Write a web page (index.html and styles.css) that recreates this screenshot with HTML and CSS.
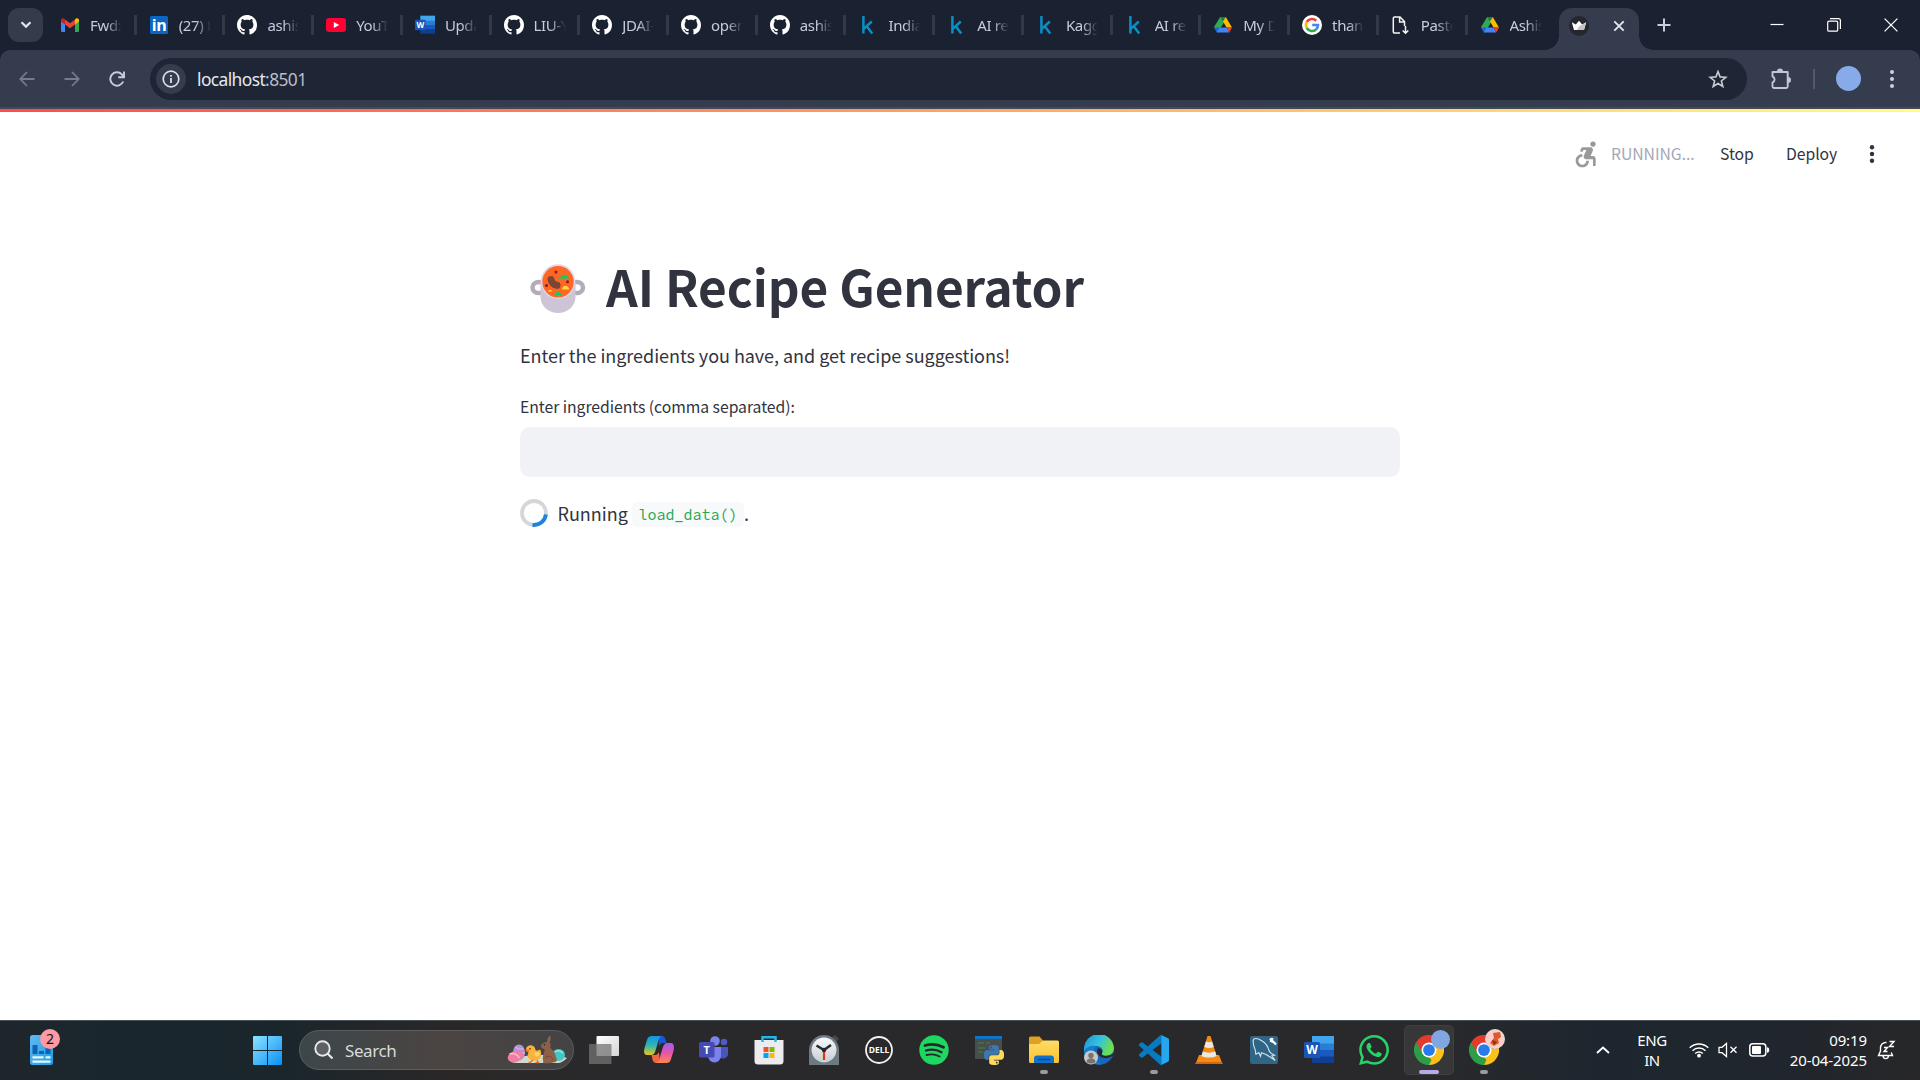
FILE: index.html
```html
<!DOCTYPE html>
<html lang="en">
<head>
<meta charset="utf-8">
<title>AI Recipe Generator</title>
<link rel="stylesheet" href="styles.css">
</head>
<body>
<svg class="defs" width="0" height="0" aria-hidden="true">
  <defs>
    <linearGradient id="gStart" x1="0" y1="0" x2="1" y2="1"><stop offset="0" stop-color="#8be4ff"/><stop offset="1" stop-color="#0a90f5"/></linearGradient>
    <linearGradient id="gNews" x1="0" y1="0" x2="1" y2="1"><stop offset="0" stop-color="#5fb9f5"/><stop offset="1" stop-color="#1c9fdf"/></linearGradient>
    <linearGradient id="gCopA" x1="0" y1="0" x2="0" y2="1"><stop offset="0" stop-color="#1593e8"/><stop offset=".5" stop-color="#2cb8b0"/><stop offset="1" stop-color="#f0c419"/></linearGradient>
    <linearGradient id="gCopB" x1="0" y1="0" x2="0" y2="1"><stop offset="0" stop-color="#a05cf0"/><stop offset=".5" stop-color="#e556a8"/><stop offset="1" stop-color="#ff8650"/></linearGradient>
    <linearGradient id="gFolder" x1="0" y1="0" x2="0" y2="1"><stop offset="0" stop-color="#ffdd66"/><stop offset="1" stop-color="#fbc02f"/></linearGradient>
    <linearGradient id="gEdge" x1="0" y1="0" x2="1" y2=".4"><stop offset="0" stop-color="#1b8fd8"/><stop offset=".55" stop-color="#35c1df"/><stop offset="1" stop-color="#6be04c"/></linearGradient>
    <linearGradient id="gView" x1="0" y1="0" x2="1" y2="1"><stop offset="0" stop-color="#fff"/><stop offset="1" stop-color="#d5d5d5"/></linearGradient>
    <linearGradient id="gDial" x1="0" y1="0" x2="0" y2="1"><stop offset="0" stop-color="#f7f8fa"/><stop offset="1" stop-color="#c9ced3"/></linearGradient>
    <symbol id="github" viewBox="0 0 16 16"><path fill="#fff" d="M8 0C3.58 0 0 3.58 0 8c0 3.54 2.29 6.53 5.47 7.59.4.07.55-.17.55-.38 0-.19-.01-.82-.01-1.49-2.01.37-2.53-.49-2.69-.94-.09-.23-.48-.94-.82-1.13-.28-.15-.68-.52-.01-.53.63-.01 1.08.58 1.23.82.72 1.21 1.87.87 2.33.66.07-.52.28-.87.51-1.07-1.78-.2-3.64-.89-3.64-3.95 0-.87.31-1.59.82-2.15-.08-.2-.36-1.02.08-2.12 0 0 .67-.21 2.2.82.64-.18 1.32-.27 2-.27s1.36.09 2 .27c1.53-1.04 2.2-.82 2.2-.82.44 1.1.16 1.92.08 2.12.51.56.82 1.27.82 2.15 0 3.07-1.87 3.75-3.65 3.95.29.25.54.73.54 1.48 0 1.07-.01 1.93-.01 2.2 0 .21.15.46.55.38A8.01 8.01 0 0 0 16 8c0-4.42-3.58-8-8-8z"/></symbol>
    <symbol id="kaggle" viewBox="0 0 20 20"><path d="M5.4 1v17.5M13.8 6.5 6 13.6M8.6 11l5.6 7.5" fill="none" stroke="#0a8fc4" stroke-width="2.5"/></symbol>
    <symbol id="drive" viewBox="0 0 20 20"><path fill="#34a853" d="M7.2 2h2.9l2.1 3.6-7.4 12L1 11.9z"/><path fill="#188038" d="M7.2 2h5.6L10 6.8z"/><path fill="#fbbc04" d="M12.8 2 19 12.4h-5.4L10 6.4z"/><path fill="#4285f4" d="M6.4 12.4h7.2l2.6 5.2H3.8z"/><path fill="#1967d2" d="M1 12.4h5.4l-2.6 5.2z"/><path fill="#ea4335" d="M13.6 12.4H19l-2.8 5.2z"/></symbol>
    <symbol id="word" viewBox="0 0 30 28"><path fill="#41a5ee" d="M8 0h22v8H8z"/><path fill="#2b7cd3" d="M8 7.5h22v7H8z"/><path fill="#185abd" d="M8 14h22v7H8z"/><path fill="#103f91" d="M8 20.5h22V27H8z"/><rect y="6" width="16" height="16" rx="1.5" fill="#1856b8"/><text x="8" y="18.3" text-anchor="middle" class="logo-w">W</text></symbol>
    <symbol id="chrome" viewBox="0 0 48 48"><path fill="#e33b2e" d="M24 24 3.2 12A24 24 0 0 1 44.8 12z"/><path fill="#fcc117" d="M24 24 44.8 12A24 24 0 0 1 24 48z"/><path fill="#2d9d49" d="M24 24v24A24 24 0 0 1 3.2 12z"/><path fill="#e33b2e" d="M24 12h20.8L40 15 24 20zM3.2 12l10.4 18L20 20z"/><path fill="#fcc117" d="m34.4 30-10.4 18-2-3 8-18z"/><path fill="#2d9d49" d="m3.2 12 10.4 18L24 35l4 5-4 8C8 46-4 30 3.2 12z"/><circle cx="24" cy="24" r="12" fill="#fff"/><circle cx="24" cy="24" r="9.4" fill="#287be9"/></symbol>
    <symbol id="pyhalf" viewBox="0 0 24 24"><path d="M14.25.18l.9.2.73.26.59.3.45.32.34.34.25.34.16.33.1.3.04.26.02.2-.01.13V8.5l-.05.63-.13.55-.21.46-.26.38-.3.31-.33.25-.35.19-.35.14-.33.1-.3.07-.26.04-.21.02H8.77l-.69.05-.59.14-.5.22-.41.27-.33.32-.27.35-.2.36-.15.37-.1.35-.07.32-.04.27-.02.21v3.06H3.17l-.21-.03-.28-.07-.32-.12-.35-.18-.36-.26-.36-.36-.35-.46-.32-.59-.28-.73-.21-.88-.14-1.05-.05-1.23.06-1.22.16-1.04.24-.87.32-.71.36-.57.4-.44.42-.33.42-.24.4-.16.36-.1.32-.05.24-.01h.16l.06.01h8.16v-.83H6.18l-.01-2.75-.02-.37.05-.34.11-.31.17-.28.25-.26.31-.23.38-.2.44-.18.51-.15.58-.12.64-.1.71-.06.77-.04.84-.02 1.27.05zm-6.3 1.98l-.23.33-.08.41.08.41.23.34.33.22.41.09.41-.09.33-.22.23-.34.08-.41-.08-.41-.23-.33-.33-.22-.41-.09-.41.09z"/></symbol>
  </defs>
</svg>

<div class="tabstrip">
  <div class="tab-search"><svg width="12" height="8" viewBox="0 0 12 8"><path d="m1.5 1.2 4.5 4.4 4.5-4.4" fill="none" stroke="#dfe2ee" stroke-width="2.2"/></svg></div>
  <div class="tabs">
    <div class="tab"><svg class="fav" viewBox="0 0 20 20"><path fill="#4285f4" d="M1 5.5 5 8v9H2.2A1.2 1.2 0 0 1 1 15.8z"/><path fill="#34a853" d="M15 8l4-2.5v10.3a1.2 1.2 0 0 1-1.2 1.2H15z"/><path fill="#fbbc04" d="M15 4.5 16 3.6c1.3-1 3-.1 3 1.5V6.5l-4 3z"/><path fill="#c5221f" d="M5 4.5 4 3.6C2.7 2.6 1 3.5 1 5.1V6.5l4 3z"/><path fill="#ea4335" d="M5 4.5l5 3.8 5-3.8v5l-5 3.8-5-3.8z"/></svg><span>Fwd: M</span></div>
    <div class="tab"><svg class="fav" viewBox="0 0 20 20"><rect x="1" y="1" width="18" height="18" rx="1.5" fill="#0a66c2"/><text x="10" y="15.8" text-anchor="middle" class="logo-in">in</text></svg><span>(27) Fe</span></div>
    <div class="tab"><svg class="fav"><use href="#github"/></svg><span>ashish</span></div>
    <div class="tab"><svg class="fav" viewBox="0 0 20 20"><rect y="3" width="20" height="14" rx="3.2" fill="#ff0033"/><path fill="#fff" d="M7.8 7v6l5.4-3z"/></svg><span>YouTu</span></div>
    <div class="tab"><svg class="fav"><use href="#word"/></svg><span>Updat</span></div>
    <div class="tab"><svg class="fav"><use href="#github"/></svg><span>LIU-Yu</span></div>
    <div class="tab"><svg class="fav"><use href="#github"/></svg><span>JDAI-C</span></div>
    <div class="tab"><svg class="fav"><use href="#github"/></svg><span>openc</span></div>
    <div class="tab"><svg class="fav"><use href="#github"/></svg><span>ashish</span></div>
    <div class="tab"><svg class="fav"><use href="#kaggle"/></svg><span>Indian</span></div>
    <div class="tab"><svg class="fav"><use href="#kaggle"/></svg><span>AI reci</span></div>
    <div class="tab"><svg class="fav"><use href="#kaggle"/></svg><span>Kaggle</span></div>
    <div class="tab"><svg class="fav"><use href="#kaggle"/></svg><span>AI reci</span></div>
    <div class="tab"><svg class="fav"><use href="#drive"/></svg><span>My Dr</span></div>
    <div class="tab"><svg class="fav" viewBox="0 0 20 20"><circle cx="10" cy="10" r="10" fill="#fff"/><g fill="none" stroke-width="2.6"><path stroke="#ea4335" d="M4.8 7A6 6 0 0 1 14.2 5.7"/><path stroke="#fbbc04" d="M4.8 13a6 6 0 0 1 0-6"/><path stroke="#34a853" d="M14 14.5A6 6 0 0 1 4.8 13"/><path stroke="#4285f4" d="M10.2 10H16a6 6 0 0 1-2 4.5"/></g></svg><span>thank</span></div>
    <div class="tab"><svg class="fav" viewBox="0 0 20 20"><path fill="none" stroke="#f4f4f4" stroke-width="1.5" d="M9 18H3.500a1.200 1.200 0 0 1-1.200-1.200V3.200A1.200 1.200 0 0 1 3.500 2H9l4.500 4.500V11M8.600 2v5h5M14.500 11v7M11.700 15.500l2.800 2.800 2.800-2.800"/></svg><span>Paste</span></div>
    <div class="tab last"><svg class="fav"><use href="#drive"/></svg><span>Ashish</span></div>
  </div>
  <div class="tab-active">
    <svg class="fav" viewBox="0 0 20 20"><circle cx="10" cy="10" r="10" fill="#25262e"/><path fill="#fff" d="m2.800 6.300 4 2.200L10 4.800l3.200 3.700 4-2.200-2.200 7.700H5z"/><path fill="#c4c4c8" d="m10 10.500 7.200-4.200L15 14H8z"/></svg>
    <svg width="12" height="12" viewBox="0 0 12 12"><path d="m1.300 1.300 9.400 9.400m0-9.400-9.400 9.400" stroke="#e3e6f0" stroke-width="1.900"/></svg>
  </div>
  <svg class="new-tab" width="14" height="14" viewBox="0 0 14 14"><path d="M7 .5v13M.5 7h13" stroke="#c9cede" stroke-width="2"/></svg>
  <div class="window-controls">
    <svg width="14" height="14" viewBox="0 0 14 14"><path d="M.5 6.500h13" stroke="#fff" stroke-width="1.200"/></svg>
    <svg width="14" height="14" viewBox="0 0 14 14"><g fill="none" stroke="#fff" stroke-width="1.200"><rect x=".7" y="3.200" width="10" height="10" rx="1.300"/><path d="M3 .7h8.500a1.900 1.900 0 0 1 1.900 1.900V11"/></g></svg>
    <svg width="14" height="14" viewBox="0 0 14 14"><path d="m.6.6 12.800 12.800m0-12.800L.6 13.400" stroke="#fff" stroke-width="1.300"/></svg>
  </div>
</div>

<div class="toolbar">
  <div class="nav">
    <svg width="16" height="16" viewBox="0 0 16 16"><path d="M15.500 8H1.500M8 1 1.300 8 8 15" fill="none" stroke="#747b8c" stroke-width="1.800"/></svg>
    <svg width="16" height="16" viewBox="0 0 16 16"><path d="M.5 8h14M8 1l6.700 7L8 15" fill="none" stroke="#747b8c" stroke-width="1.800"/></svg>
    <svg width="16" height="16" viewBox="0 0 16 16"><path d="M14.200 10.500A6.700 6.700 0 1 1 12.800 3.300l2 2.400M15 .5v5.700H9.300" fill="none" stroke="#c9cede" stroke-width="1.900"/></svg>
  </div>
  <div class="address">
    <div class="info"><svg width="18" height="18" viewBox="0 0 18 18"><circle cx="9" cy="9" r="7.800" fill="none" stroke="#dcdfe9" stroke-width="1.700"/><path d="M9 8v5M9 5v1.800" stroke="#dcdfe9" stroke-width="1.800"/></svg></div>
    <div class="url">localhost<span>:8501</span></div>
    <svg class="star" width="20" height="20" viewBox="0 0 20 20"><path d="m10 2.600 2.100 5.300 5.700.4-4.400 3.700 1.400 5.500-4.800-3-4.800 3 1.400-5.500L2.200 8.300l5.700-.4z" fill="none" stroke="#c9cbd3" stroke-width="1.600"/></svg>
  </div>
  <svg class="puzzle" width="22" height="22" viewBox="0 0 22 22"><path d="M2.500 4h15.200v14.500a1.500 1.500 0 0 1-1.500 1.500H4a1.500 1.500 0 0 1-1.500-1.500v-4a3.200 3.200 0 0 0 0-6z" fill="none" stroke="#c0c6dc" stroke-width="1.900" stroke-linejoin="round"/><path d="M7 3.500a3 3 0 0 1 6 0zM18 9a3 3 0 0 1 0 6z" fill="#c0c6dc"/></svg>
  <i class="bar-sep"></i>
  <i class="avatar"></i>
  <svg width="4" height="18" viewBox="0 0 4 18" fill="#cdd1e0"><circle cx="2" cy="2" r="2"/><circle cx="2" cy="9" r="2"/><circle cx="2" cy="16" r="2"/></svg>
</div>

<div class="page">
  <div class="decoration"></div>
  <div class="app-header">
    <svg width="32" height="32" viewBox="0 0 24 24" fill="#999"><circle cx="18" cy="4.540" r="2"/><path d="M15 17h-2c0 1.650-1.350 3-3 3s-3-1.350-3-3 1.350-3 3-3v-2c-2.760 0-5 2.240-5 5s2.240 5 5 5 5-2.240 5-5zM18 13.500h-1.860l1.670-3.670C18.420 8.500 17.440 7 15.960 7h-5.200c-.81 0-1.540.47-1.870 1.200L8.220 10l1.920.53.65-1.530H13l-1.830 4.100c-.6 1.330.39 2.900 1.850 2.900H18v5h2v-5.500c0-1.100-.9-2-2-2z"/></svg>
    <span class="running">RUNNING...</span>
    <span class="stop">Stop</span>
    <span class="deploy">Deploy</span>
    <svg class="kebab" width="6" height="18" viewBox="0 0 6 18" fill="#31333f"><circle cx="3" cy="2.300" r="2.200"/><circle cx="3" cy="9" r="2.200"/><circle cx="3" cy="15.700" r="2.200"/></svg>
  </div>
  <main>
    <h1>
      <svg width="56" height="50" viewBox="0 0 56 50"><g fill="none" stroke="#b4acbc" stroke-width="4.500"><ellipse cx="9" cy="23.500" rx="6.500" ry="5.600"/><ellipse cx="46.500" cy="23.500" rx="6.500" ry="5.600"/></g><path fill="#cdc4d6" d="M10.500 18h35v15c0 9-8 16-17.500 16s-17.500-7-17.500-16z"/><ellipse cx="28" cy="17.500" rx="17.300" ry="17.300" fill="#e1d8ec"/><ellipse cx="28" cy="17.800" rx="15.700" ry="15.700" fill="#ff6723"/><path d="m21 15.500c.5 3 3 5.500 6 5.800" fill="none" stroke="#7d4533" stroke-width="7" stroke-linecap="round"/><path fill="#00d26a" d="M28 14.500c1-2 3-2 4-1.800 1-3 6-3 7.200 1.800zM24.500 31c1-4 6-4 7 0z"/><path fill="#fcd53f" d="M32 25.500c.7-5 6-5 7.300 0zM18 27.500c.7-2 3.500-2 4.300 0z"/><g fill="#8c1337"><circle cx="26" cy="8" r="1.500"/><circle cx="37.500" cy="17.800" r="1.500"/><circle cx="16.500" cy="21.500" r="1.500"/></g></svg>
      <span>AI Recipe Generator</span>
    </h1>
    <p class="intro">Enter the ingredients you have, and get recipe suggestions!</p>
    <label for="ingredients">Enter ingredients (comma separated):</label>
    <input id="ingredients" type="text">
    <div class="status">
      <svg width="28" height="28" viewBox="0 0 28 28" fill="none" stroke-width="3.800"><circle cx="14" cy="14" r="12" stroke="#d5d6d8"/><path d="M25.900 15.500A12 12 0 0 1 12.500 25.900" stroke="#1c83e1"/></svg>
      <span class="status-text">Running</span><code>load_data()</code><span class="status-text dot">.</span>
    </div>
  </main>
</div>

<div class="taskbar">
  <div class="widgets">
    <svg width="24" height="31" viewBox="0 0 24 31"><rect width="23" height="30" rx="2.500" fill="url(#gNews)"/><path fill="#0f62b4" d="M2.500 10h5v9h-5zM9 16h5v3H9zM15.500 12h5v7h-5z"/><path d="M2.500 22.300h11M15.500 22.300h5M2.500 26.600h18" stroke="#e6f7ff" stroke-width="2.200"/></svg>
    <b>2</b>
  </div>
  <svg class="start" width="29" height="29" viewBox="0 0 29 29" fill="url(#gStart)"><path d="M1 0h13v14H0V1a1 1 0 0 1 1-1zM15 0h13a1 1 0 0 1 1 1v13H15zM0 15h14v14H1a1 1 0 0 1-1-1zM15 15h14v13a1 1 0 0 1-1 1H15z"/></svg>
  <div class="search">
    <svg width="20" height="20" viewBox="0 0 20 20"><circle cx="8.500" cy="8.500" r="7.200" fill="#5d6166" stroke="#e8eaea" stroke-width="1.900"/><path d="m13.500 13.500 5 5" stroke="#e8eaea" stroke-width="2.200"/></svg>
    <span>Search</span>
    <svg width="60" height="30" viewBox="0 0 60 30"><path d="M2 25c10-5 44-7 58-2-3 3-6 4.500-8 5H10c-4 0-7-1-8-3z" fill="#cfdcca"/><ellipse cx="12" cy="17.500" rx="6" ry="8" fill="#b791d5"/><path d="M8 12q3 3 9 2M7 16q5 3 11 2" stroke="#d9bdea" fill="none"/><ellipse cx="8.500" cy="21.500" rx="8" ry="5.500" transform="rotate(-20 8.500 21.500)" fill="#ef7da4"/><path d="M2.500 19q6-2 10 4" stroke="#ffc1d3" fill="none" stroke-width="1.400"/><path d="M19 14c1-5 9-5 9.500 1 2 2 3-1 5 0 2 7-1 10.500-6 10.500-6 0-8.500-4-6-7.500z" fill="#fbb23b"/><path d="M27 18c2-1 4-1 6 0-.5 3-3 4-5 3z" fill="#ffd277"/><path d="m17.500 15.800 4.500-1.500v3z" fill="#ed7d20"/><circle cx="23" cy="13.800" r=".8" fill="#402515"/><path d="m26 25-3 2.500h-1.500M30 25l1.500 2.500h-3" stroke="#e76e21" stroke-width="1.300" fill="none"/><ellipse cx="51.500" cy="20" rx="6.500" ry="6" fill="#43c6c5"/><path d="M48 17q4-3 8 1" stroke="#93e5e0" stroke-width="1.500" fill="none"/><path d="M36 28c1-2-1-4 0-7 .5-3 2-5 1.500-7-3.500-.5-4.500-3.500-2.500-5 1.500-1.800 3.500-2 5-1.800 0-3 1-5 3-6.700 1.200 1.700 1 4-.5 7 1.500 1 1.500 3 .5 5 3 3 6 6.500 6 10 1.500 1.500 1 3.500-.5 4.500-4 1.200-9 1.500-12.500 1z" fill="#8c6148"/><path d="M38 23c3-3 7-2 8 2" fill="none" stroke="#6f4835"/><circle cx="37.500" cy="9.800" r=".8" fill="#321e15"/></svg>
  </div>
  <div class="apps">
    <div class="app"><svg width="30" height="28" viewBox="0 0 30 28"><rect x="7.500" width="22.500" height="20" rx="1" fill="url(#gView)"/><rect y="8" width="22.500" height="20" rx="1" fill="#747474" fill-opacity=".75"/></svg></div>
    <div class="app"><svg width="30" height="28" viewBox="0 0 30 28"><path fill="#1b55cf" d="M14 0h4c3 0 3.500 3 4.500 7H19c-2 0-3 1-4 3z"/><path fill="url(#gCopA)" d="M8 0h10c-3 1-3.500 4-4.500 8L11 16c-.8 2-2 3-4 3H3c-3 0-3.500-3-2.500-7L3 4c1-3 2-4 5-4z"/><path fill="#ef6640" d="M16 27h-4c-3 0-3.500-3-4.500-8H11c2 0 3-1 4-3z"/><path fill="url(#gCopB)" d="M22 27H12c3-1 3.500-4 4.500-8L19 11c.8-2 2-4 4-4h4c3 0 3.500 4 2.500 8L27 23c-1 3-2 4-5 4z"/></svg></div>
    <div class="app"><svg width="30" height="28" viewBox="0 0 30 28"><circle cx="25" cy="6" r="3.300" fill="#5059c9"/><path d="M21 11h8v7.500a5 5 0 0 1-8 3z" fill="#4b53bc"/><circle cx="16" cy="5" r="4.800" fill="#7b83eb"/><path d="M9 11h13v9a6.500 6.500 0 0 1-13 0z" fill="#7b83eb"/><rect y="6" width="15.500" height="15.500" rx="1.500" fill="#444bb5"/><text x="7.700" y="17.800" text-anchor="middle" class="logo-t">T</text></svg></div>
    <div class="app"><svg width="30" height="30" viewBox="0 0 30 30"><path fill="#ececee" d="M.5 5h29v21a3.500 3.500 0 0 1-3.500 3.500H4A3.500 3.500 0 0 1 .5 26z"/><path d="M8.500 7V2.200h13V7" fill="none" stroke="#24b5ea" stroke-width="2.500"/><path fill="#f25022" d="M9.500 12H14.500v5h-5z"/><path fill="#7fba00" d="M15.500 12h5v5h-5z"/><path fill="#00a4ef" d="M9.500 18h5v5h-5z"/><path fill="#ffb900" d="M15.500 18h5v5h-5z"/></svg></div>
    <div class="app"><svg width="30" height="30" viewBox="0 0 30 30"><path fill="#47494c" d="m23 2 3-2 4 4-3 3z"/><path fill="#6d7a84" d="M0 30V15a15 15 0 0 1 30 0v15z"/><circle cx="15" cy="15" r="12.400" fill="url(#gDial)"/><path d="m7.500 10.500 7.500 4.500 7-5" fill="none" stroke="#26292c" stroke-width="2.500"/><path d="M15 15v10" stroke="#d83b16" stroke-width="2.200"/><circle cx="15" cy="15" r="2.200" fill="#26292c"/></svg></div>
    <div class="app"><svg width="28" height="28" viewBox="0 0 28 28"><circle cx="14" cy="14" r="13" fill="none" stroke="#f1f1f1" stroke-width="1.800"/><text x="14" y="17.200" text-anchor="middle" class="logo-dell" textLength="20.500" lengthAdjust="spacingAndGlyphs">DELL</text></svg></div>
    <div class="app"><svg width="30" height="30" viewBox="0 0 30 30"><circle cx="15" cy="15" r="14.700" fill="#1ed760"/><g fill="none" stroke="#25282a" stroke-linecap="round"><path d="M6 10.500c6-1.800 13-1.200 18.500 1.800" stroke-width="2.800"/><path d="M7 15.500c5-1.500 11-.9 15.500 1.700" stroke-width="2.300"/><path d="M7.600 20c4.500-1.200 9-.7 13 1.500" stroke-width="1.900"/></g></svg></div>
    <div class="app"><svg width="30" height="30" viewBox="0 0 30 30"><rect x="1" y="1" width="27" height="23" fill="#4a4d50"/><path fill="#0f74c6" d="M1 1h27v3H1z"/><path d="M4 8h6M4 13h7M12 8h4M4 17h5" stroke="#378a38" stroke-width="1.200"/><use href="#pyhalf" x="10" y="10" width="20" height="20" fill="#3a78ad"/><g transform="rotate(180 20 20)"><use href="#pyhalf" x="10" y="10" width="20" height="20" fill="#ffd95a"/></g></svg></div>
    <div class="app open"><svg width="30" height="28" viewBox="0 0 30 28"><path fill="#e0a021" d="M0 2a1.500 1.500 0 0 1 1.500-1.500h9L14 4.500V9H0z"/><path fill="url(#gFolder)" d="M0 8h10l4-3.500h14.500A1.500 1.500 0 0 1 30 6v19.500a1.500 1.500 0 0 1-1.500 1.500h-27A1.500 1.500 0 0 1 0 25.500z"/><path fill="#0f72c9" d="M5 27v-4.500A3 3 0 0 1 8 19.500h14a3 3 0 0 1 3 3V27z"/><path d="M9 23.500h12" stroke="#064a94" stroke-width="1.500"/></svg></div>
    <div class="app"><svg width="30" height="30" viewBox="0 0 30 30"><circle cx="15" cy="15" r="15" fill="#1667b7"/><path fill="url(#gEdge)" d="M0 15A15 15 0 0 1 30 13c0 5-4 7.500-8 7.500-3 0-5-1-4-2.500 2-3-.5-7-6-7C6 11 1 14 0 17z"/><path fill="#1280d2" d="M12 11c-5 6-3 15 6 18C8 31 0 24 0 16c2-4 7-6 12-5z"/><path fill="#28282a" d="M14.500 13c-3 3-1 9 6 10 4 .6 7-1 9.500-3.500V18c-4 4-14 4-12 0 1-2 0-4-3.500-5z"/><circle cx="7" cy="22.500" r="7" fill="#c9c7c5"/><circle cx="7" cy="20.500" r="2.700" fill="#777371"/><path d="M2.500 27c0-5 9-5 9 0-2 2-7 2-9 0z" fill="#777371"/></svg></div>
    <div class="app open"><svg width="30" height="30" viewBox="0 0 24 24"><path fill="#087abf" d="M23.150 2.587L18.210.21a1.494 1.494 0 0 0-1.705.29l-9.460 8.630-4.120-3.128a.999.999 0 0 0-1.276.057L.327 7.261A1 1 0 0 0 .326 8.740L3.899 12 .326 15.260a1 1 0 0 0 .001 1.479L1.650 17.940a.999.999 0 0 0 1.276.057l4.120-3.128 9.460 8.630a1.492 1.492 0 0 0 1.704.290l4.942-2.377A1.500 1.500 0 0 0 24 20.060V3.939a1.500 1.500 0 0 0-.850-1.352zm-5.146 14.861L10.826 12l7.178-5.448v10.896z"/><path fill="#26a5f1" d="M18 .2 23.150 2.587A1.500 1.500 0 0 1 24 3.939V20.060a1.500 1.500 0 0 1-.850 1.352L18 23.800z"/></svg></div>
    <div class="app"><svg width="28" height="30" viewBox="0 0 28 30"><path fill="#f48b16" d="M4 20h20l3.500 9H.5z"/><path fill="#d96507" d="M1 27h26l.7 2H.3z"/><path fill="#f58a12" d="M12.500 1h3L22 22c-3 3-13 3-16 0z"/><path fill="#e9e9e9" d="m11 6.500-1.700 5.500c3 1.400 6.500 1.400 9.400 0L17 6.500c-2 .9-4 .9-6 0zM7.800 16.500 6.500 21c4 2 11 2 15 0l-1.300-4.500c-4 1.500-8.500 1.500-12.400 0z"/></svg></div>
    <div class="app"><svg width="30" height="30" viewBox="0 0 30 30"><rect x="1" y="1" width="28" height="28" rx="2" fill="#2f6687"/><path d="M6.500 19.500C7.500 16 5.500 14 4.700 10.500 4 7 3.500 3.500 6.500 3.500c3-.2 5 1.500 7 2.800 3.500 2 5.500 5.500 6.700 9.700.6 2 3.300 3 5.300 4.200l-2.700.6 3.500 4.700-4.800-3.200M6.500 19.500l3.300-2 1.700 3.800 1-3.600c3 .8 6 2.300 9 4.600" fill="none" stroke="#d8e4eb" stroke-width="1.100"/><path d="M21 3.500l1.500 1.700M23.500 3l-1 3.200-1.500-.7M23 5.500l4 4" stroke="#fff" stroke-width="2.200" fill="none"/></svg></div>
    <div class="app"><svg width="30" height="28"><use href="#word"/></svg></div>
    <div class="app"><svg width="30" height="30" viewBox="0 0 24 24"><path fill="#25d366" d="M17.472 14.382c-.297-.149-1.758-.867-2.030-.967-.273-.099-.471-.148-.670.150-.197.297-.767.966-.940 1.164-.173.199-.347.223-.644.075-.297-.150-1.255-.463-2.390-1.475-.883-.788-1.480-1.761-1.653-2.059-.173-.297-.018-.458.130-.606.134-.133.298-.347.446-.520.149-.174.198-.298.298-.497.099-.198.050-.371-.025-.520-.075-.149-.669-1.612-.916-2.207-.242-.579-.487-.500-.669-.510-.173-.008-.371-.010-.570-.010-.198 0-.520.074-.792.372-.272.297-1.040 1.016-1.040 2.479 0 1.462 1.065 2.875 1.213 3.074.149.198 2.096 3.200 5.077 4.487.709.306 1.262.489 1.694.625.712.227 1.360.195 1.871.118.571-.085 1.758-.719 2.006-1.413.248-.694.248-1.289.173-1.413-.074-.124-.272-.198-.570-.347m-5.421 7.403h-.004a9.870 9.870 0 01-5.031-1.378l-.361-.214-3.741.982.998-3.648-.235-.374a9.860 9.860 0 01-1.510-5.260c.001-5.450 4.436-9.884 9.888-9.884 2.640 0 5.122 1.030 6.988 2.898a9.825 9.825 0 012.893 6.994c-.003 5.450-4.437 9.884-9.885 9.884m8.413-18.297A11.815 11.815 0 0012.050 0C5.495 0 .160 5.335.157 11.892c0 2.096.547 4.142 1.588 5.945L.057 24l6.305-1.654a11.882 11.882 0 005.683 1.448h.005c6.554 0 11.890-5.335 11.893-11.893a11.821 11.821 0 00-3.480-8.413z"/></svg></div>
    <div class="app active"><svg width="30" height="30"><use href="#chrome"/></svg><i class="profile"></i></div>
    <div class="app open"><svg width="30" height="30"><use href="#chrome"/></svg><svg class="profile photo" viewBox="0 0 20 20"><circle cx="10" cy="10" r="10" fill="#f8cfca"/><path d="m8 4 7-1 1 5-3 2 1 4-5 3-4-3 4-5z" fill="#dd592c"/><path d="m7 11 5 2-3 3z" fill="#8b2f16"/></svg></div>
  </div>
  <div class="tray">
    <svg width="14" height="8" viewBox="0 0 14 8"><path d="m1 7 6-5.500L13 7" fill="none" stroke="#fff" stroke-width="1.900"/></svg>
    <div class="lang">ENG<br>IN</div>
    <svg width="20" height="16" viewBox="0 0 20 16"><g fill="none" stroke="#fff" stroke-width="1.400"><path d="M.7 5.800a13.300 13.300 0 0 1 18.600 0M3.500 8.700a9.300 9.300 0 0 1 13 0M6.200 11.500a5.400 5.400 0 0 1 7.600 0"/></g><circle cx="10" cy="13.700" r="1.900" fill="#fff"/></svg>
    <svg class="mute" width="20" height="16" viewBox="0 0 20 16"><path d="M1 5.300h3L8.500 1.500v13L4 10.700H1zM12.500 4.800l6 6m0-6-6 6" fill="none" stroke="#fff" stroke-width="1.300"/></svg>
    <svg class="battery" width="21" height="14" viewBox="0 0 21 14"><rect x=".8" y=".8" width="16" height="12.200" rx="3" fill="none" stroke="#fff" stroke-width="1.500"/><rect x="3" y="3" width="9" height="8" rx="1" fill="#fff"/><path d="M18 4.200c3 0 3 5.500 0 5.500z" fill="#fff"/></svg>
    <div class="clock">09:19<br>20-04-2025</div>
    <svg class="bell" width="19" height="20" viewBox="0 0 19 20"><path d="M9.500 2.500C5.500 2.200 3.500 5 3.500 8v3L1.500 15.500h14l-1.300-3M6 16c.5 3.500 5 3.500 5.500 0M7 7.500h3.500L7 11.500h3.500M12.500 1.500h4.500l-4.500 5h4.500" fill="none" stroke="#fff" stroke-width="1.400"/></svg>
  </div>
</div>
</body>
</html>
```
FILE: styles.css
```css
* { box-sizing: border-box; }
body {
  margin: 0;
  width: 1920px;
  height: 1080px;
  overflow: hidden;
  display: flex;
  flex-direction: column;
  background: #1a2131;
  font-family: "Noto Sans", sans-serif;
}
svg { display: block; flex: none; }
.defs { position: absolute; }

/* Browser tab strip */
.tabstrip { height: 50px; display: flex; align-items: center; background: #1a2131; }
.tab-search {
  width: 35px; height: 34px; margin-left: 8px; border-radius: 11px;
  background: #343b4b; display: flex; align-items: center; justify-content: center;
}
.tabs { display: flex; margin-left: 5px; width: 1507px; }
.tab {
  width: 88.73px; height: 20px; flex: none; padding-left: 12px;
  display: flex; align-items: center; border-right: 3px solid #323848;
}
.tab.last { border-color: transparent; }
.fav { width: 20px; height: 20px; flex: none; }
.tab span {
  margin-left: 10px; width: 32px; overflow: hidden; white-space: nowrap;
  font-size: 15px; line-height: 22px; letter-spacing: -.35px; color: #c7ccdd;
  -webkit-mask-image: linear-gradient(90deg, #000 50%, transparent);
  mask-image: linear-gradient(90deg, #000 50%, transparent);
}
.tab-active {
  position: relative; align-self: flex-end; width: 80px; height: 42px; margin-left: 4px;
  padding: 0 14px 7px 10px; border-radius: 13px 13px 0 0; background: #353c4d;
  display: flex; align-items: center; justify-content: space-between;
}
.tab-active::before, .tab-active::after {
  content: ""; position: absolute; bottom: 0; width: 14px; height: 14px;
}
.tab-active::before { left: -14px; background: radial-gradient(circle at 0 0, transparent 13.5px, #353c4d 14px); }
.tab-active::after { right: -14px; background: radial-gradient(circle at 100% 0, transparent 13.5px, #353c4d 14px); }
.new-tab { margin-left: 18px; }
.window-controls { margin-left: auto; margin-right: 22px; display: flex; gap: 43px; }

/* Address row */
.toolbar {
  height: 59px; padding: 0 26px 0 19px; display: flex; align-items: center;
  background: #353c4d; border-radius: 10px 10px 0 0; border-bottom: 2px solid #444a58;
}
.nav { display: flex; gap: 29px; width: 131px; }
.address {
  width: 1597px; height: 42px; padding: 0 19px 0 6px; border-radius: 21px;
  background: #1e2636; display: flex; align-items: center; flex: none;
}
.info {
  width: 30px; height: 30px; border-radius: 50%; background: #353c4d;
  display: flex; align-items: center; justify-content: center;
}
.url { margin-left: 11px; padding-top: 1px; font-size: 17.4px; letter-spacing: -.6px; color: #e6e8f0; }
.url span { color: #b8bdca; }
.star { margin-left: auto; }
.puzzle { margin-left: 23px; }
.bar-sep { width: 2px; height: 20px; margin-left: 21px; background: #535a6c; }
.avatar { width: 25px; height: 25px; margin: 0 auto 0 21px; border-radius: 50%; background: #86abe8; }

/* Streamlit page */
.page {
  height: 911px; background: #fff; color: #31333f;
  font-family: "Source Sans Pro", "Noto Sans CJK SC", sans-serif;
}
.decoration { height: 3px; background: linear-gradient(90deg, #ff4b4b, #fffd80); }
.app-header {
  height: 84px; padding-right: 45px; display: flex; align-items: center; justify-content: flex-end;
  font-size: 15.75px; line-height: 24px; letter-spacing: -.05px; white-space: nowrap;
}
.running { width: 83px; margin-left: 10px; color: #a3a8b8; }
.stop { width: 34px; margin-left: 26px; padding-bottom: 1px; }
.deploy { width: 51px; margin: 0 32px 0 32px; }
main { width: 880px; margin: 0 auto; }
h1 {
  margin: 63px 0 0; height: 60px; padding-left: 10px; display: flex; align-items: center;
  font-size: 49.5px; line-height: 60px; font-weight: 700; letter-spacing: -.1px; white-space: nowrap;
}
h1 span { margin-left: 20px; padding-bottom: 7px; }
.intro { margin: 21px 0 0; height: 30px; font-size: 18px; line-height: 30px; letter-spacing: -.04px; white-space: nowrap; }
label { display: block; margin-top: 25px; height: 24px; font-size: 15.75px; line-height: 24px; letter-spacing: -.04px; }
input {
  display: block; width: 880px; height: 50px; margin: 8px 0 0; border: 0;
  border-radius: 10px; background: #f0f2f6;
}
.status { display: flex; align-items: center; height: 30px; margin-top: 21px; font-size: 18px; line-height: 30px; }
.status svg { margin-left: -.5px; }
.status-text { margin-left: 10px; }
.status-text.dot { margin-left: 0; }
code {
  margin: 3px 0 0 4px; height: 25px; padding: 0 6.5px; border-radius: 5px; background: #f8f9fb; color: #21a84f;
  font: 15px/25px "Source Code Pro", "Noto Sans Mono CJK SC", "DejaVu Sans Mono", monospace;
}

/* Windows taskbar */
.taskbar {
  height: 60px; padding-bottom: 1px; display: flex; align-items: center; border-top: 1px solid #475155; color: #fff;
  background: linear-gradient(90deg, #1f262b 0, #19262e 130px, #1b262c 290px, #2b2727 450px, #29292b 600px, #29292b 1440px, #1d262f 1600px, #20262d 1780px, #272728 1920px);
}
.widgets { position: relative; width: 222px; padding-left: 30px; }
.widgets b {
  position: absolute; left: 40px; top: -6px; width: 20px; height: 20px; border-radius: 50%;
  background: #ff99a4; color: #111; font-weight: 400; font-size: 14px; line-height: 20px; text-align: center;
}
.start { margin-left: 31px; }
.search {
  width: 275px; height: 40px; margin-left: 17px; padding: 0 6px 0 14px; border-radius: 20px;
  display: flex; align-items: center; border: 1px solid #5b5e60;
  background: linear-gradient(90deg, #3c474b, #4b4442 50%, #434345);
}
.search span { margin: 0 auto 0 11px; font-size: 17px; letter-spacing: -.4px; color: #d9dada; }
.apps { display: flex; gap: 5px; margin-left: 5px; }
.app {
  position: relative; width: 50px; height: 50px; border-radius: 5px;
  display: flex; align-items: center; justify-content: center;
}
.app.active { background: #373738; border: 1px solid #3f3f40; }
.app.open::after, .app.active::after {
  content: ""; position: absolute; bottom: 1px; left: 21px; width: 8px; height: 4px;
  border-radius: 2px; background: #9b9b9b;
}
.app.active::after { bottom: 0; left: 14px; width: 20px; background: #b8a9ec; }
.profile { position: absolute; left: 26px; top: 4px; width: 19px; height: 19px; border-radius: 50%; background: #80a7e2; }
.photo { width: 20px; height: 20px; }
.tray { margin-left: auto; margin-right: 24px; display: flex; align-items: center; font-size: 15px; line-height: 20px; white-space: nowrap; }
.lang { width: 32px; margin: 0 21px 0 26px; text-align: center; letter-spacing: -.4px; }
.mute { margin-left: 9px; }
.battery { margin-left: 11px; }
.clock { width: 90px; margin-left: 7px; text-align: right; letter-spacing: -.1px; }
.bell { margin-left: 10px; }

/* Lettering inside logos */
.logo-w { font: 700 12px "Open Sans", sans-serif; fill: #fff; }
.logo-in { font: 700 16px "Open Sans", sans-serif; fill: #fff; letter-spacing: -.5px; }
.logo-t { font: 700 11px "Open Sans", sans-serif; fill: #fff; }
.logo-dell { font: 700 9px "Open Sans", sans-serif; fill: #fff; }
```
